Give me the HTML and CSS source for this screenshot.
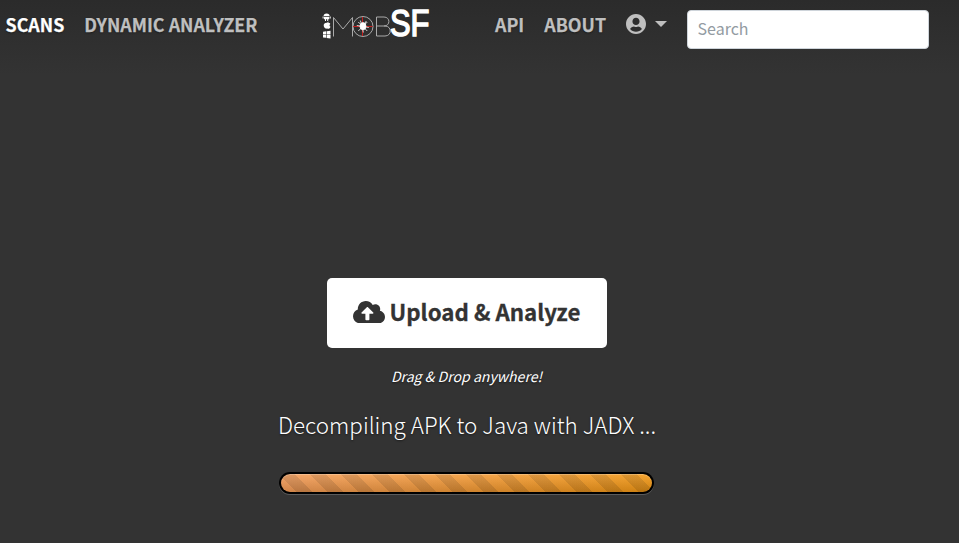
FILE: index.html
```html
<!DOCTYPE html>
<html lang="en">
<head>
<meta charset="utf-8">
<title>Mobile Security Framework - MobSF</title>
<link rel="stylesheet" href="styles.css">
</head>
<body>
<header class="masthead">
  <nav class="nav nav-left">
    <a class="link active scans">SCANS</a>
    <a class="link">DYNAMIC ANALYZER</a>
  </nav>
  <svg class="logo" width="110" height="38" viewBox="0 0 110 38" fill="none">
    <g fill="#fff" transform="translate(0 2.500)">
      <path d="M2.600 8.500a3 2.600 0 0 1 6 0zM3 9.200h5.200v2.600H3zM1.600 9h1v2h-1zM8.700 9h1v2h-1zM4 11.500h1v2H4zM6.200 11.500h1v2h-1z"/>
      <path d="M6 15.200l1.800-1.200-.5 1.500c1.500-.2 2 .6 2 .9-1.200.8-.9 2.200.2 2.800-.8 2-1.700 2.400-3.400 1.800-2 .6-3.400-1-3.400-3.200 0-2 1.500-2.800 3.300-2.600z"/>
      <path d="M2 24.200l3-.4v2.900H2zM5.600 23.700l3.900-.5v3.500H5.600zM2 27.300h3v3l-3-.4zM5.600 27.300h3.900v3.700l-3.900-.6z"/>
    </g>
    <g stroke="#aaa" stroke-width="1">
      <path d="M12.500 31.500V12.500L22 24l9.500-11.500V31.500"/>
      <circle cx="42" cy="21.500" r="10"/>
      <path d="M55.500 12V31h8.500c7 0 7-10 0-10h-8.500M55.500 12H63c6.500 0 6.500 9 0 9"/>
    </g>
    <path stroke="#c51f1f" d="M41.500 12v19M32 21.500h19.500"/>
    <g transform="translate(-.7 0)" stroke="#fff" stroke-width=".8"><path d="M38 17l2 2 2 2 5 5M47 17l-9 9M36.500 20.500l12 2M40 15.500l2 6 1 6M46 16l-3 5"/><ellipse cx="42.700" cy="21.200" rx="3" ry="3.600" fill="#fff"/></g>
    <text class="logo-sf" x="69" y="30.500" textLength="39.500" lengthAdjust="spacingAndGlyphs">SF</text>
  </svg>
  <nav class="nav nav-right">
    <a class="link api">API</a>
    <a class="link about">ABOUT</a>
    <a class="link user"><svg width="20" height="20" viewBox="0 0 496 496" fill="currentColor"><path d="M248 0C111 0 0 111 0 248s111 248 248 248 248-111 248-248S385 0 248 0zm0 96c48.600 0 88 39.400 88 88s-39.400 88-88 88-88-39.400-88-88 39.400-88 88-88zm0 344c-58.700 0-111.300-26.600-146.500-68.200 18.800-35.400 55.600-59.800 98.500-59.800 2.400 0 4.800.4 7.100 1.100 13 4.200 26.600 6.900 40.900 6.900s28-2.700 40.900-6.900c2.300-.7 4.700-1.100 7.100-1.100 42.900 0 79.700 24.400 98.500 59.800C359.300 413.400 306.700 440 248 440z"/></svg><i class="caret"></i></a>
  </nav>
  <input class="search" type="search" placeholder="Search">
</header>
<main class="cover">
  <button class="upload"><svg width="32" height="22.400" viewBox="0 32 640 448" fill="currentColor"><path d="M537.600 226.600c4.100-10.700 6.400-22.400 6.400-34.600 0-53-43-96-96-96-19.700 0-38.100 6-53.300 16.200C367 64.200 315.300 32 256 32c-88.400 0-160 71.600-160 160 0 2.700.1 5.400.2 8.100C40.200 219.800 0 273.200 0 336c0 79.500 64.500 144 144 144h368c70.700 0 128-57.300 128-128 0-61.900-44-113.600-102.400-125.400zM393.400 288H328v112c0 8.800-7.200 16-16 16h-48c-8.800 0-16-7.200-16-16V288h-65.400c-14.300 0-21.400-17.200-11.300-27.300l105.400-105.400c6.200-6.200 16.400-6.200 22.600 0l105.400 105.400c10.100 10.100 2.900 27.300-11.300 27.300z"/></svg><span>Upload &amp; Analyze</span></button>
  <p class="hint">Drag &amp; Drop anywhere!</p>
  <p class="status">Decompiling APK to Java with JADX ...</p>
  <div class="progress"><div class="bar"></div></div>
</main>
</body>
</html>
```
FILE: styles.css
```css
* { box-sizing: border-box; }
body {
  margin: 0;
  height: 543px;
  overflow: hidden;
  background: linear-gradient(#2b2b2b, #333 75px);
  color: #fff;
  font-family: "Noto Sans CJK SC", "Open Sans", sans-serif;
  text-shadow: 0 1px 2px rgba(0, 0, 0, .5);
}
.masthead { display: flex; height: 60px; padding-left: 5.500px; }
.nav { display: flex; align-items: center; height: 48px; }
.nav-left { width: 315.500px; gap: 20px; }
.nav-right { width: 192px; margin-left: 64px; gap: 20px; }
.link { color: #bfbfbf; font-size: 17.850px; font-weight: 700; line-height: 26px; white-space: nowrap; -webkit-text-stroke: .25px; }
.active { color: #fff; }
.user { display: flex; align-items: center; gap: 9px; }
.caret { border: 6px solid transparent; border-top-color: currentColor; border-bottom: 0; }
.logo { flex: none; margin-top: 5px; overflow: visible; text-shadow: none; }
.logo-sf { font: 400 36px "Liberation Sans", sans-serif; fill: #fff; stroke: #fff; stroke-width: 1.500px; }
.search {
  width: 242px;
  height: 39px;
  margin: 10px 0 0;
  padding: 0 9.500px 3px;
  border: 1px solid #ced4da;
  border-radius: 4px;
  background: #fff;
  font: 16px "Noto Sans CJK SC", sans-serif;
}
.search::placeholder { color: #939ba2; }
.cover { display: flex; flex-direction: column; align-items: center; width: 934px; padding-top: 218px; }
.upload {
  display: flex;
  align-items: center;
  justify-content: center;
  gap: 5px;
  width: 280px;
  height: 70px;
  padding: 0 1px 2px 0;
  border: 0;
  border-radius: 5px;
  background: #fff;
  color: #333;
  font: 700 22.300px "Noto Sans CJK SC", sans-serif;
  -webkit-text-stroke: .3px;
  white-space: nowrap;
}
.upload span { margin-top: -2px; }
.hint { margin: 16px 1px 0 0; font-size: 14.100px; font-style: italic; line-height: 24px; }
.status { margin: 18px 0 0; font-size: 22.400px; font-weight: 300; line-height: 36px; white-space: nowrap; }
.progress { width: 375px; height: 22px; margin: 30px 1px 0 0; padding: 2px; border-radius: 11px; background: #000; box-shadow: 0 1px 0 rgba(255, 255, 255, .2); }
.bar {
  height: 18px;
  border-radius: 9px;
  background:
    linear-gradient(rgba(255, 255, 255, .12), rgba(0, 0, 0, .15)),
    repeating-linear-gradient(45deg, transparent 0 11px, rgba(0, 0, 0, .11) 11px 22px),
    linear-gradient(90deg, #f49c58, #f39814);
  box-shadow: inset 0 1px 0 rgba(255, 255, 255, .25);
}
```
